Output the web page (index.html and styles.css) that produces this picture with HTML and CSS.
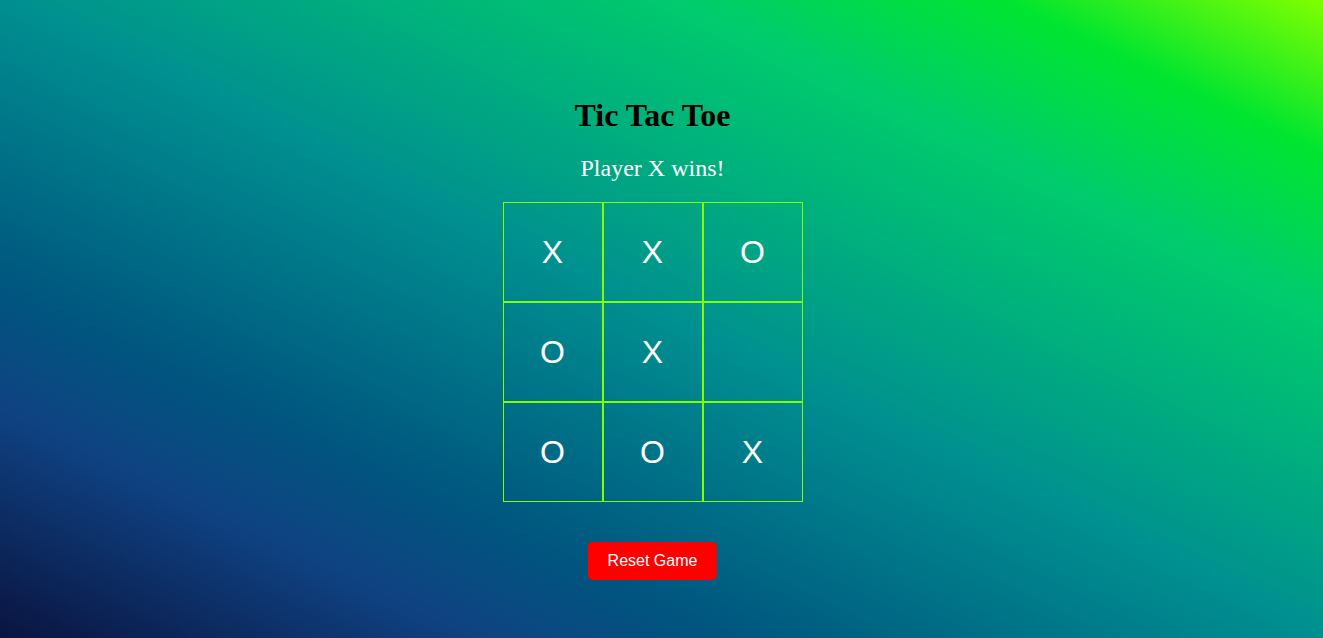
FILE: index.html
```html
<!DOCTYPE html>
<html lang="en">
<head>
<meta charset="utf-8">
<title>Tic Tac Toe</title>
<link rel="stylesheet" href="styles.css">
</head>
<body>
<main class="game">
  <h1 class="title">Tic Tac Toe</h1>
  <p class="status">Player X wins!</p>
  <div class="board">
    <div class="cell">X</div>
    <div class="cell">X</div>
    <div class="cell">O</div>
    <div class="cell">O</div>
    <div class="cell">X</div>
    <div class="cell"></div>
    <div class="cell">O</div>
    <div class="cell">O</div>
    <div class="cell">X</div>
  </div>
  <button class="reset">Reset Game</button>
</main>
</body>
</html>
```
FILE: styles.css
```css
html, body {
  margin: 0;
  padding: 0;
  height: 100%;
}

body {
  font-family: "Liberation Serif", "Times New Roman", serif;
  background: linear-gradient(to top right,
    #0a1440 0%,
    #0f4282 18%,
    #00567f 28%,
    #008f90 50%,
    #00cc6c 76%,
    #00e530 88%,
    #80ff00 100%);
  overflow: hidden;
}

.game {
  display: flex;
  flex-direction: column;
  align-items: center;
  padding: 97px 18px 0 0;
}

.title {
  margin: 0 0 21px;
  font-size: 32px;
  font-weight: bold;
  color: #000;
}

.status {
  margin: 0 0 20px;
  font-size: 24px;
  color: #fff;
}

.board {
  display: grid;
  grid-template-columns: repeat(3, 100px);
  grid-template-rows: repeat(3, 100px);
  margin-bottom: 40px;
}

.cell {
  box-sizing: border-box;
  border: 1px solid #7fff00;
  display: flex;
  align-items: center;
  justify-content: center;
  font-family: "Liberation Sans", Arial, sans-serif;
  font-size: 32px;
  color: #fff;
}

.reset {
  font-family: "Liberation Sans", Arial, sans-serif;
  font-size: 16px;
  color: #fff;
  background: #ff0000;
  border: none;
  border-radius: 5px;
  padding: 10px 20px;
  cursor: pointer;
}
```
